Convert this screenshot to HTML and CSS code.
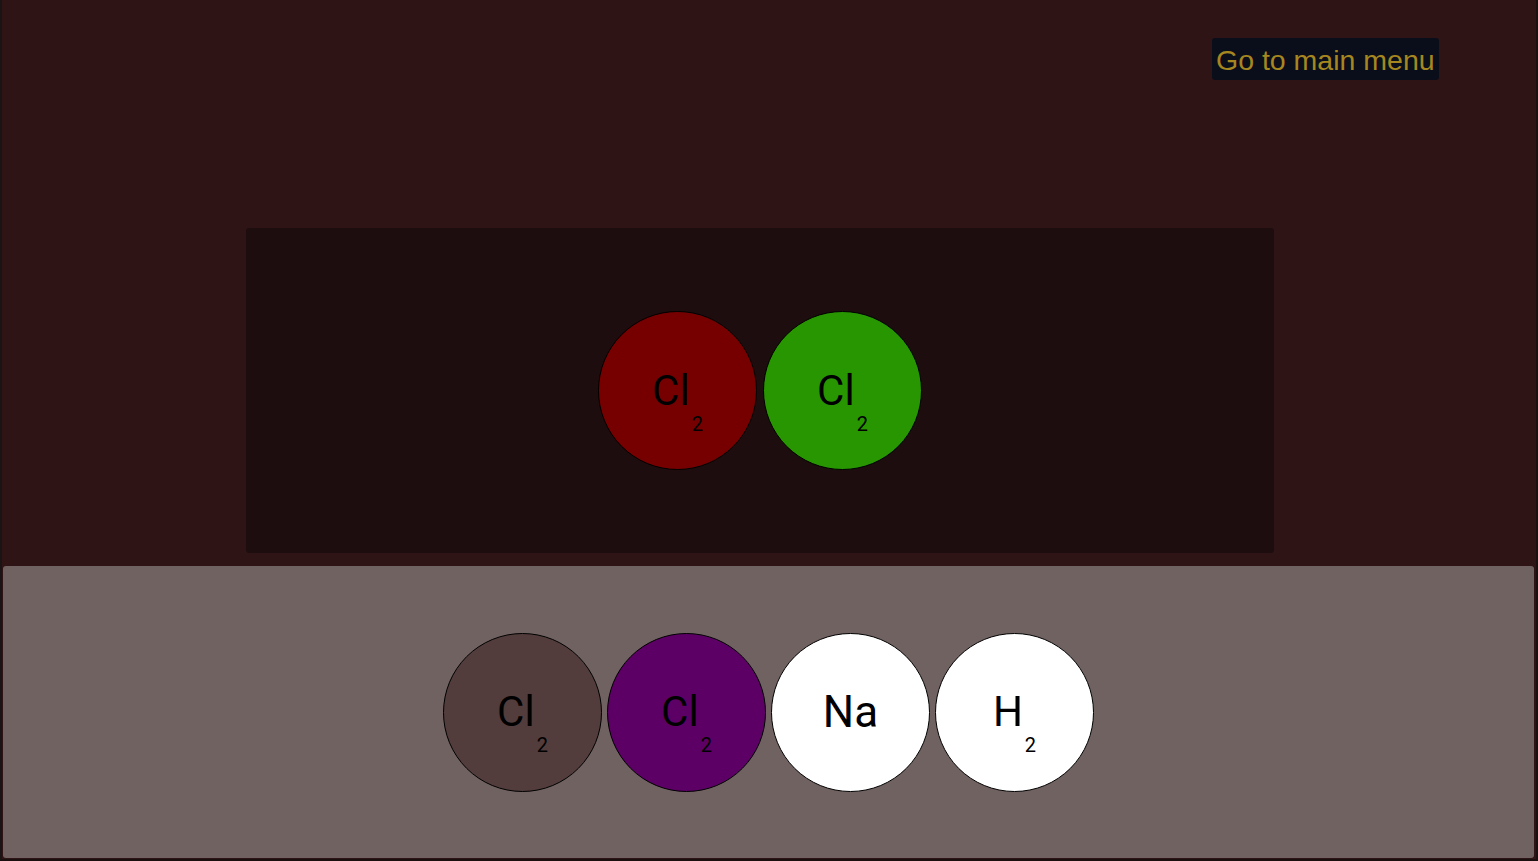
FILE: index.html
```html
<!DOCTYPE html>
<html lang="en">
<head>
<meta charset="utf-8">
<title>Molecules</title>
<link rel="stylesheet" href="styles.css">
</head>
<body>
<div class="app">
  <header class="topbar">
    <button class="menu-btn">Go to main menu</button>
  </header>
  <section class="stage">
    <div class="atom atom-red"><span class="sym">Cl<span class="sub">2</span></span></div>
    <div class="atom atom-green"><span class="sym">Cl<span class="sub">2</span></span></div>
  </section>
  <section class="tray">
    <div class="atom atom-brown"><span class="sym">Cl<span class="sub">2</span></span></div>
    <div class="atom atom-purple"><span class="sym">Cl<span class="sub">2</span></span></div>
    <div class="atom atom-white"><span class="sym sym-big">Na</span></div>
    <div class="atom atom-white"><span class="sym">H<span class="sub">2</span></span></div>
  </section>
</div>
</body>
</html>
```
FILE: styles.css
```css
* { box-sizing: border-box; }
html, body { margin: 0; padding: 0; }
body {
  background: #2f1416;
  font-family: Roboto, "Liberation Sans", sans-serif;
}
.app {
  width: 1538px;
  height: 861px;
  border-left: 2px solid #1b1414;
  border-right: 2px solid #1b1010;
  border-bottom: 2px solid #1b1010;
  display: flex;
  flex-direction: column;
}
.topbar {
  height: 228px;
  display: flex;
  justify-content: flex-end;
  align-items: flex-start;
  padding-top: 38px;
  padding-right: 97px;
}
.menu-btn {
  width: 227px;
  height: 42px;
  background: #0a0e1b;
  color: #a6861f;
  border: none;
  border-radius: 3px;
  font-family: "Liberation Sans", Arial, sans-serif;
  font-size: 28.5px;
  padding: 3px 0 0 4px;
  text-align: left;
  white-space: nowrap;
  cursor: pointer;
}
.stage {
  margin-left: 244px;
  width: 1028px;
  height: 325px;
  background: #1e0d0e;
  border-radius: 3px;
  display: flex;
  justify-content: center;
  align-items: center;
  gap: 6px;
}
.tray {
  margin: 13px 2px 0 1px;
  height: 292px;
  background: #716262;
  border-radius: 3px;
  display: flex;
  justify-content: center;
  align-items: center;
  gap: 5px;
}
.atom {
  width: 159px;
  height: 159px;
  border-radius: 50%;
  border: 1px solid #000;
  display: flex;
  justify-content: center;
  align-items: center;
  color: #000;
}
.atom-red { background: #760000; }
.atom-green { background: #279600; }
.atom-brown { background: #523c3c; }
.atom-purple { background: #5c0066; }
.atom-white { background: #ffffff; }
.sym {
  font-size: 42px;
  line-height: 1;
}
.sym-big { font-size: 44px; }
.sub {
  font-size: 20px;
  position: relative;
  top: 26px;
  margin-left: 2px;
}
```
